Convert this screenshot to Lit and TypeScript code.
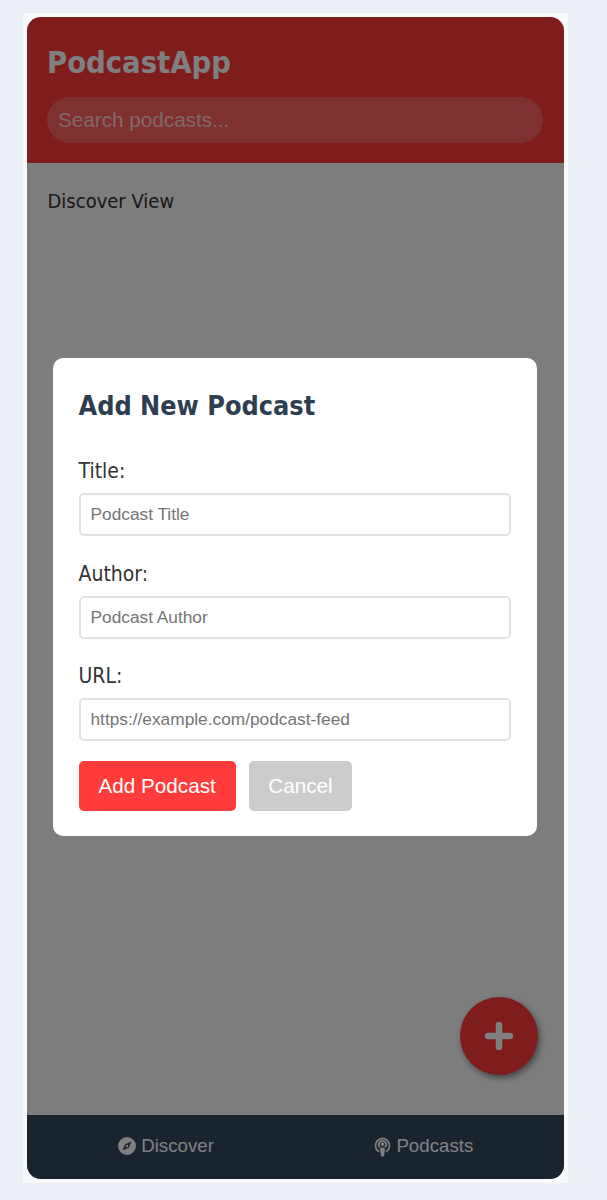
import { LitElement, html, css } from "lit";
import { customElement } from "lit/decorators.js";

const compassIcon = html`<svg class="nav-icon" viewBox="0 0 20 20" aria-hidden="true">
  <path fill-rule="evenodd" d="M10 0a10 10 0 1 1 0 20a10 10 0 0 1 0-20zM15 5L8 8L5 15L12 12z"></path>
  <circle cx="10" cy="10" r="1.3"></circle>
</svg>`;

const podcastIcon = html`<svg class="nav-icon tall" viewBox="0 0 18 24" aria-hidden="true">
  <path class="ring" d="M4.4 17.4a8 8 0 1 1 9.2 0"></path>
  <path class="ring" d="M5.8 12.4a4.2 4.2 0 1 1 6.4 0"></path>
  <circle cx="9" cy="9.2" r="2.1"></circle>
  <path d="M6.2 14.6q0-1.4 2.8-1.4t2.8 1.4l-.9 7.4q-.2 1.6-1.9 1.6t-1.9-1.6z"></path>
</svg>`;

@customElement("app-root")
export class AppRoot extends LitElement {
  render() {
    return html`
      <div class="frame">
        <div class="app">
          <header class="header">
            <h1>PodcastApp</h1>
            <input class="search" type="text" placeholder="Search podcasts..." />
          </header>
          <main class="content">
            <p>Discover View</p>
          </main>
          <button class="fab" aria-label="Add podcast">
            <svg viewBox="0 0 28 28" aria-hidden="true">
              <path d="M14 3v22M3 14h22"></path>
            </svg>
          </button>
          <nav class="nav">
            <a class="nav-item">${compassIcon}<span>Discover</span></a>
            <a class="nav-item">${podcastIcon}<span>Podcasts</span></a>
          </nav>
          <div class="overlay">
            <form class="modal">
              <h2>Add New Podcast</h2>
              <div class="group">
                <label>Title:</label>
                <input type="text" placeholder="Podcast Title" />
              </div>
              <div class="group">
                <label>Author:</label>
                <input type="text" placeholder="Podcast Author" />
              </div>
              <div class="group">
                <label>URL:</label>
                <input type="text" placeholder="https://example.com/podcast-feed" />
              </div>
              <div class="actions">
                <button type="button" class="btn primary">Add Podcast</button>
                <button type="button" class="btn secondary">Cancel</button>
              </div>
            </form>
          </div>
        </div>
      </div>
    `;
  }

  static styles = css`
    :host {
      display: block;
      height: 1200px;
      padding: 13px 0 0 23px;
      box-sizing: border-box;
      background: #ebf0f7;
      font-family: "DejaVu Sans", Verdana, sans-serif;
      color: #333;
    }
    .frame {
      width: 545px;
      height: 1170px;
      padding: 4px;
      box-sizing: border-box;
      background: #f8f9fa;
    }
    .app {
      position: relative;
      display: flex;
      flex-direction: column;
      height: 100%;
      border-radius: 14px;
      overflow: hidden;
      background: #fafafa;
    }
    .header {
      display: flex;
      flex-direction: column;
      gap: 14px;
      height: 146px;
      padding: 26px 21px 0 20px;
      box-sizing: border-box;
      background: #ff3b3b;
    }
    h1 {
      margin: 0;
      font-size: 30.6px;
      line-height: 40px;
      font-weight: 700;
      font-stretch: condensed;
      color: #fff;
    }
    .search {
      height: 46px;
      padding: 0 11px;
      border: 0;
      border-radius: 23px;
      box-sizing: border-box;
      background: rgba(255, 255, 255, 0.2);
      font: 20.7px "Liberation Sans", Arial, sans-serif;
    }
    .search::placeholder {
      color: rgba(255, 255, 255, 0.72);
    }
    .content {
      flex: 1;
      padding: 26px 21px 26px 20.5px;
      font-size: 20px;
    }
    .content p {
      margin: 0;
      line-height: 24px;
      font-stretch: condensed;
    }
    .fab {
      position: absolute;
      right: 26px;
      bottom: 104px;
      display: flex;
      align-items: center;
      justify-content: center;
      width: 78px;
      height: 78px;
      padding: 0;
      border: 0;
      border-radius: 50%;
      background: #ff3b3b;
      box-shadow: 2px 3px 6px rgba(0, 0, 0, 0.45);
    }
    .fab svg {
      width: 28px;
      height: 28px;
      fill: none;
      stroke: #fff;
      stroke-width: 6.5;
      stroke-linecap: round;
    }
    .nav {
      display: flex;
      justify-content: center;
      gap: 160px;
      height: 64px;
      background: #34495e;
    }
    .nav-item {
      display: flex;
      align-items: center;
      gap: 5.5px;
      padding-bottom: 2px;
      color: #fff;
      font: 18.7px "Liberation Sans", Arial, sans-serif;
    }
    .nav-icon {
      width: 18px;
      height: 18px;
      fill: #fff;
    }
    .nav-icon.tall {
      width: 17px;
      height: 21px;
    }
    .ring {
      fill: none;
      stroke: #fff;
      stroke-width: 2;
      stroke-linecap: round;
    }
    .overlay {
      position: absolute;
      inset: 0;
      display: flex;
      align-items: center;
      justify-content: center;
      padding: 0 2px 2px 0;
      background: rgba(0, 0, 0, 0.5);
    }
    .modal {
      width: 484px;
      height: 478px;
      padding: 26px;
      box-sizing: border-box;
      border-radius: 10px;
      background: #fff;
    }
    h2 {
      margin: 0 0 31px;
      font-size: 26.8px;
      line-height: 44px;
      font-weight: 700;
      font-stretch: condensed;
      color: #2c3e50;
    }
    .group {
      display: flex;
      flex-direction: column;
      gap: 10px;
      margin-bottom: 25.5px;
    }
    label {
      font-size: 21px;
      line-height: 24px;
      font-stretch: condensed;
    }
    .group input {
      height: 43px;
      padding: 0 10px;
      border: 2px solid #e2e2e2;
      border-radius: 5px;
      box-sizing: border-box;
      font: 17.3px "Liberation Sans", Arial, sans-serif;
    }
    .group input::placeholder {
      color: #757575;
    }
    .actions {
      display: flex;
      gap: 13px;
      margin-top: -5.5px;
    }
    .btn {
      height: 50px;
      padding: 0 20px;
      border: 0;
      border-radius: 5px;
      color: #fff;
      font: 20.7px "Liberation Sans", Arial, sans-serif;
    }
    .primary {
      background: #ff3b3b;
    }
    .secondary {
      padding: 0 19.5px;
      background: #ccc;
    }
  `;
}
